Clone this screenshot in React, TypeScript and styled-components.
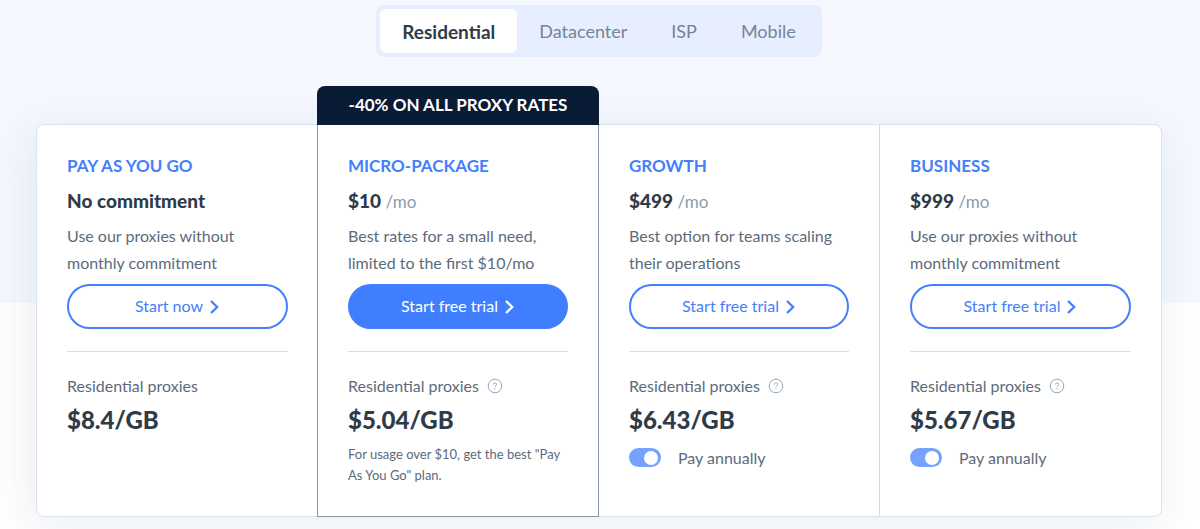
import React, { useState } from "react";
import styled, { createGlobalStyle } from "styled-components";

const GlobalStyle = createGlobalStyle`
  *, *::before, *::after { box-sizing: border-box; }
  body {
    margin: 0;
    color: #5c6b7c;
    background: #fff linear-gradient(#f5f8ff, #f5f8ff) no-repeat 0 0 / 100% 303px;
    font-family: Lato, "Open Sans", sans-serif;
    font-size: 16px;
    line-height: 27px;
  }
  button, input { font: inherit; margin: 0; }
  h2, p { margin: 0; }
`;

const Page = styled.main`
  display: flex;
  flex-direction: column;
  align-items: center;
  min-height: 100vh;
  padding: 5px 38px 12px 36px;
  overflow: hidden;
`;

const Tabs = styled.div`
  display: flex;
  padding: 4px;
  border-radius: 8px;
  background: #e7eeff;
`;

const Tab = styled.button<{ $active: boolean }>`
  height: 44px;
  padding: 0 22px;
  border: 0;
  border-radius: 6px;
  background: ${(p) => (p.$active ? "#fff" : "transparent")};
  color: ${(p) => (p.$active ? "#2f3b47" : "#748596")};
  font-size: ${(p) => (p.$active ? 19 : 18)}px;
  font-weight: ${(p) => (p.$active ? 700 : 400)};
  cursor: pointer;
`;

const Plans = styled.div`
  display: grid;
  grid-template-columns: repeat(4, minmax(0, 1fr));
  width: 100%;
  margin-top: 67px;
  border: 1px solid #dbe3ee;
  border-radius: 8px;
  background: #fff;
  box-shadow: -4px 8px 48px rgba(20, 40, 90, 0.09);
`;

const Plan = styled.section<{ $featured?: boolean; $divided?: boolean }>`
  position: relative;
  padding: 27px 30px 30px;
  ${(p) => p.$divided && "border-right: 1px solid #d3dce5;"}
  ${(p) => p.$featured && "margin: -1px 0 -1px -1px; border: 1px solid #8796ab;"}
`;

const Banner = styled.div`
  position: absolute;
  right: -1px;
  bottom: 100%;
  left: -1px;
  padding-bottom: 2px;
  border-radius: 8px 8px 0 0;
  background: #0a1b36;
  color: #fff;
  font-size: 17px;
  font-weight: 700;
  line-height: 37px;
  text-align: center;
`;

const Title = styled.h2`
  color: #4480fb;
  font-size: 17px;
  font-weight: 700;
  line-height: 27px;
`;

const Price = styled.p`
  margin-top: 8px;
  color: #2f3b47;
  font-size: 19px;
  font-weight: 900;
`;

const Period = styled.span`
  color: #8a9bb0;
  font-size: 17px;
  font-weight: 400;
  line-height: 1;
`;

const Description = styled.p`
  min-height: 54px;
  margin-top: 8px;
`;

const Action = styled.button<{ $filled?: boolean }>`
  display: flex;
  align-items: center;
  justify-content: center;
  gap: 6px;
  width: 100%;
  height: 45px;
  margin-top: 8px;
  padding: 0 0 2px;
  border: 2px solid #4480fb;
  border-radius: 24px;
  background: ${(p) => (p.$filled ? "#3f7fff" : "#fff")};
  color: ${(p) => (p.$filled ? "#fff" : "#4480fb")};
  cursor: pointer;
`;

const Divider = styled.hr`
  width: 100%;
  height: 1px;
  margin: 22px 0 20px;
  border: 0;
  background: #d9dfea;
`;

const Product = styled.p`
  display: flex;
  align-items: center;
  gap: 8px;
`;

const Rate = styled.p`
  margin-top: 6px;
  color: #2f3b47;
  font-size: 24px;
  font-weight: 900;
  line-height: 30px;
`;

const Note = styled.p`
  margin-top: 9px;
  font-size: 13px;
  line-height: 21px;
`;

const Annual = styled.label`
  display: flex;
  align-items: center;
  gap: 17px;
  margin-top: 9px;
  cursor: pointer;
`;

const Switch = styled.input`
  display: flex;
  align-items: center;
  width: 32px;
  height: 19px;
  padding: 0 3px;
  border-radius: 10px;
  background: #b9c4d3;
  appearance: none;
  cursor: pointer;
  &::before {
    content: "";
    width: 14px;
    height: 14px;
    border-radius: 50%;
    background: #fff;
  }
  &:checked { justify-content: flex-end; background: #76a2ff; }
`;

const Chevron = () => (
  <svg width="11" height="18" viewBox="0 0 11 18" fill="none" aria-hidden="true">
    <path d="M2 4l6.2 6L2 16" stroke="currentColor" strokeWidth="2.3" />
  </svg>
);

const HelpIcon = () => (
  <svg width="16" height="16" viewBox="0 0 16 16" fill="none" stroke="#95a5ba" aria-hidden="true">
    <circle cx="8" cy="8" r="6.8" />
    <path d="M6.4 6.5c.1-1 .7-1.5 1.6-1.5s1.6.5 1.6 1.3c0 1.1-1.6 1.2-1.6 2.6M8 10v1.2" />
  </svg>
);

const tabs = ["Residential", "Datacenter", "ISP", "Mobile"];

interface PlanData {
  name: string;
  price: string;
  monthly?: boolean;
  lines: [string, string];
  action: string;
  rate: string;
  banner?: string;
  help?: boolean;
  note?: [string, string];
  annual?: boolean;
}

const plans: PlanData[] = [
  {
    name: "PAY AS YOU GO", price: "No commitment",
    lines: ["Use our proxies without", "monthly commitment"],
    action: "Start now", rate: "$8.4/GB",
  },
  {
    name: "MICRO-PACKAGE", price: "$10", monthly: true,
    lines: ["Best rates for a small need,", "limited to the first $10/mo"],
    action: "Start free trial", rate: "$5.04/GB", help: true,
    banner: "-40% ON ALL PROXY RATES",
    note: ['For usage over $10, get the best "Pay', 'As You Go" plan.'],
  },
  {
    name: "GROWTH", price: "$499", monthly: true,
    lines: ["Best option for teams scaling", "their operations"],
    action: "Start free trial", rate: "$6.43/GB", help: true, annual: true,
  },
  {
    name: "BUSINESS", price: "$999", monthly: true,
    lines: ["Use our proxies without", "monthly commitment"],
    action: "Start free trial", rate: "$5.67/GB", help: true, annual: true,
  },
];

export default function App() {
  const [active, setActive] = useState("Residential");
  return (
    <Page>
      <GlobalStyle />
      <Tabs role="tablist">
        {tabs.map((t) => (
          <Tab key={t} role="tab" aria-selected={t === active} $active={t === active} onClick={() => setActive(t)}>
            {t}
          </Tab>
        ))}
      </Tabs>
      <Plans>
        {plans.map((p, i) => (
          <Plan key={p.name} $featured={!!p.banner} $divided={i === 2}>
            {p.banner && <Banner>{p.banner}</Banner>}
            <Title>{p.name}</Title>
            <Price>
              {p.price} {p.monthly && <Period>/mo</Period>}
            </Price>
            <Description>
              {p.lines[0]}
              <br />
              {p.lines[1]}
            </Description>
            <Action $filled={!!p.banner}>
              {p.action}
              <Chevron />
            </Action>
            <Divider />
            <Product>
              Residential proxies
              {p.help && <HelpIcon />}
            </Product>
            <Rate>{p.rate}</Rate>
            {p.note && (
              <Note>
                {p.note[0]}
                <br />
                {p.note[1]}
              </Note>
            )}
            {p.annual && (
              <Annual>
                <Switch type="checkbox" defaultChecked />
                Pay annually
              </Annual>
            )}
          </Plan>
        ))}
      </Plans>
    </Page>
  );
}
